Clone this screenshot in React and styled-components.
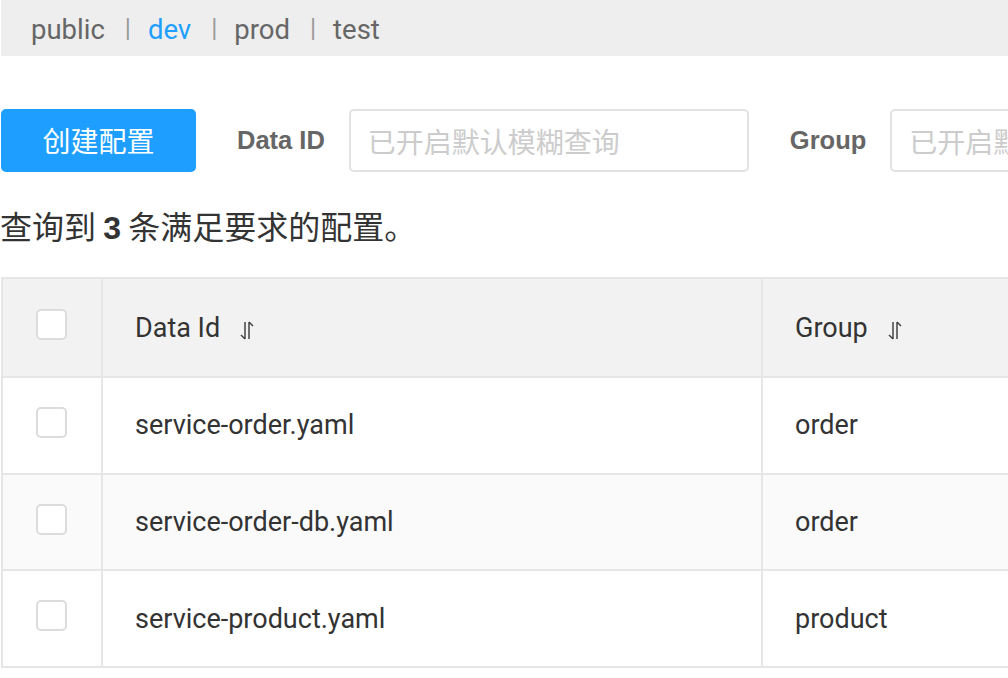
import styled, { createGlobalStyle } from "styled-components";

const GlobalStyle = createGlobalStyle`
  body {
    margin: 0;
    background: #fff;
    font-family: Roboto, "Noto Sans CJK SC", sans-serif;
  }
`;

const namespaces = ["public", "dev", "prod", "test"];

const rows = [
  { id: "service-order.yaml", group: "order" },
  { id: "service-order-db.yaml", group: "order" },
  { id: "service-product.yaml", group: "product" },
];

const SortIcon = () => (
  <SortSvg width="16" height="24" viewBox="0 0 16 24">
    <path d="M6 4 V21 M6 21 L2 17" stroke="#444" strokeWidth="1.5" fill="none" />
    <path d="M10 21 V4 M10 4 L14 8" stroke="#444" strokeWidth="1.5" fill="none" />
  </SortSvg>
);

const App = () => {
  return (
    <>
      <GlobalStyle />
      <Page>
        <NamespaceBar>
          {namespaces.map((ns, i) => (
            <span key={ns}>
              {i > 0 && <Divider>|</Divider>}
              <NsLink active={ns === "dev"}>{ns}</NsLink>
            </span>
          ))}
        </NamespaceBar>

        <Toolbar>
          <CreateButton>创建配置</CreateButton>
          <Label>Data ID</Label>
          <SearchInput placeholder="已开启默认模糊查询" />
          <Label>Group</Label>
          <SearchInput placeholder="已开启默认模糊查询" />
        </Toolbar>

        <Summary>
          查询到 <b>3</b> 条满足要求的配置。
        </Summary>

        <Table>
          <HeadRow>
            <CheckCell>
              <Checkbox />
            </CheckCell>
            <Cell>
              Data Id
              <SortIcon />
            </Cell>
            <Cell>
              Group
              <SortIcon />
            </Cell>
          </HeadRow>
          {rows.map((r, i) => (
            <Row key={r.id} striped={i === 1}>
              <CheckCell>
                <Checkbox />
              </CheckCell>
              <Cell>{r.id}</Cell>
              <Cell>{r.group}</Cell>
            </Row>
          ))}
        </Table>
      </Page>
    </>
  );
};

export default App;

const Page = styled.div`
  width: 1008px;
  height: 678px;
  overflow: hidden;
  padding-left: 1px;
  box-sizing: border-box;
`;

const NamespaceBar = styled.div`
  height: 56px;
  width: 1100px;
  background: #eeeeee;
  display: flex;
  align-items: center;
  padding-left: 30px;
  padding-top: 3px;
  box-sizing: border-box;
  font-size: 27.5px;
  font-family: Roboto, sans-serif;
`;

const NsLink = styled.span`
  color: ${({ active }) => (active ? "#1e9fff" : "#666")};
`;

const Divider = styled.span`
  color: #999;
  font-size: 25px;
  margin: 0 17px 0 20px;
  position: relative;
  top: -2px;
`;

const Toolbar = styled.div`
  display: flex;
  align-items: center;
  margin-top: 53px;
  height: 63px;
  white-space: nowrap;
`;

const CreateButton = styled.button`
  all: unset;
  flex: none;
  width: 195px;
  height: 63px;
  background: #1e9fff;
  border-radius: 5px;
  color: #fff;
  font-size: 28px;
  font-family: "Noto Sans CJK SC", sans-serif;
  text-align: center;
  line-height: 63px;
`;

const Label = styled.label`
  flex: none;
  margin: 0 24px 0 41px;
  font-family: "Liberation Sans", Arial, sans-serif;
  font-weight: 700;
  font-size: 25.5px;
  color: #666;
`;

const SearchInput = styled.input`
  flex: none;
  width: 400px;
  height: 63px;
  box-sizing: border-box;
  border: 2px solid #e2e2e2;
  border-radius: 5px;
  padding: 0 17px;
  font-size: 28px;
  font-family: "Noto Sans CJK SC", sans-serif;
  outline: none;
  &::placeholder {
    color: #cccccc;
  }
`;

const Summary = styled.div`
  margin-top: 33px;
  font-family: "Noto Sans CJK SC", sans-serif;
  font-size: 32px;
  color: #333;
  line-height: 40px;
  margin-left: -1px;
  b {
    font-family: "Liberation Sans", Arial, sans-serif;
    font-weight: 700;
  }
`;

const Table = styled.div`
  margin-top: 29px;
  width: 1100px;
  border-top: 2px solid #e6e6e6;
  border-left: 2px solid #e6e6e6;
`;

const Row = styled.div`
  display: grid;
  grid-template-columns: 100px 660px 1fr;
  height: 96.7px;
  background: ${({ striped }) => (striped ? "#fafafa" : "#fff")};
  font-family: Roboto, sans-serif;
  font-size: 27px;
  color: #333;
`;

const HeadRow = styled(Row)`
  height: 99px;
  background: #f2f2f2;
`;

const Cell = styled.div`
  display: flex;
  align-items: center;
  padding-left: 32px;
  border-right: 2px solid #e6e6e6;
  border-bottom: 2px solid #e6e6e6;
`;

const CheckCell = styled(Cell)`
  padding-left: 33px;
`;

const Checkbox = styled.span`
  display: block;
  width: 31px;
  height: 31px;
  box-sizing: border-box;
  border: 2px solid #dcdcdc;
  border-radius: 5px;
  background: #fff;
  margin-top: -6px;
`;

const SortSvg = styled.svg`
  margin-left: 19px;
  margin-top: 4px;
`;
